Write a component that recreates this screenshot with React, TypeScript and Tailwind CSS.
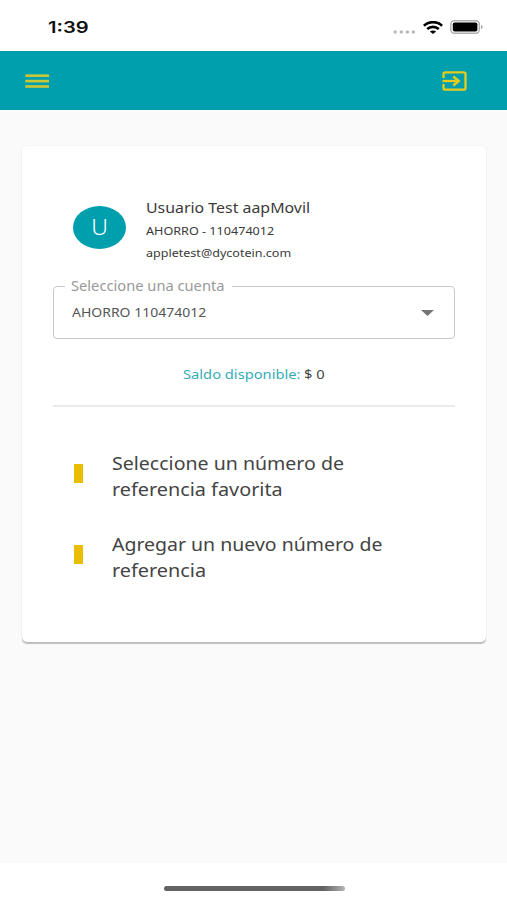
import type { ReactNode } from 'react';

type Opcion = {
  id: number;
  lineas: { texto: string; escala: string }[];
};

const usuario = {
  inicial: 'U',
  nombre: 'Usuario Test aapMovil',
  cuenta: 'AHORRO - 110474012',
  correo: 'appletest@dycotein.com',
};

const opciones: Opcion[] = [
  {
    id: 1,
    lineas: [
      { texto: 'Seleccione un número de', escala: 'scale-x-[1.117]' },
      { texto: 'referencia favorita', escala: 'scale-x-[1.133]' },
    ],
  },
  {
    id: 2,
    lineas: [
      { texto: 'Agregar un nuevo número de', escala: 'scale-x-[1.113]' },
      { texto: 'referencia', escala: 'scale-x-[1.135]' },
    ],
  },
];

// Una línea de texto ensanchada desde su borde izquierdo
function Linea({ className, children }: { className: string; children: ReactNode }) {
  return <span className={`block w-fit whitespace-nowrap origin-left ${className}`}>{children}</span>;
}

function BarraEstado() {
  return (
    <div className="h-[51px] shrink-0 bg-white flex items-start justify-between pl-12 pr-6">
      <Linea className="mt-[17px] font-['Inter',sans-serif] text-[16px] leading-5 font-semibold text-[#111] scale-x-[1.26]">
        1:39
      </Linea>
      <div className="flex items-center mt-[20px]">
        <svg width="24" height="4" viewBox="0 0 24 4" className="mt-[9px]" fill="#b8b8b8">
          <circle cx="2.2" cy="2" r="1.7" />
          <circle cx="8.3" cy="2" r="1.7" />
          <circle cx="14.4" cy="2" r="1.7" />
          <circle cx="20.5" cy="2" r="1.7" />
        </svg>
        <svg width="20" height="13" viewBox="0 0 20 13" className="ml-[6px]" fill="none" stroke="#000" strokeWidth="2.6">
          <path d="M.9 4.700C6-.1 14-.1 19.100 4.700" />
          <path d="M4.200 8c3.300-2.900 8.300-2.900 11.600 0" />
          <path d="M10 13 6.900 10.600c1.800-1.500 4.400-1.500 6.200 0z" fill="#000" stroke="none" />
        </svg>
        <svg width="34" height="14" viewBox="0 0 34 14" className="ml-[7px] -mr-[1px]">
          <rect x=".8" y=".8" width="28.6" height="12.4" rx="3.6" fill="none" stroke="#b0b0b0" strokeWidth="1.4" />
          <rect x="2.8" y="2.4" width="24.6" height="9.2" rx="1.800" fill="#000" />
          <path d="M31 5v4c1-.3 1.600-1.100 1.600-2S32 5.300 31 5z" fill="#a8a8a8" />
        </svg>
      </div>
    </div>
  );
}

function Cabecera() {
  return (
    <header className="h-[59px] shrink-0 bg-[#009fae] flex items-center justify-between pl-[25px] pr-[40px]">
      <button aria-label="Menú">
        <svg width="24" height="14" viewBox="0 0 24 14" fill="#cbc636">
          <rect x=".3" y=".4" width="23.700" height="2.600" />
          <rect x=".3" y="5.800" width="23.700" height="2.600" />
          <rect x=".3" y="11.200" width="23.700" height="2.600" />
        </svg>
      </button>
      <button aria-label="Salir">
        <svg width="25" height="20" viewBox="0 0 25 20" fill="none" stroke="#e6cb1d" strokeWidth="2.3">
          <path d="M1.500 7V3q0-1.700 1.800-1.700h18.400q1.800 0 1.800 1.700v14q0 1.700-1.800 1.700H3.300q-1.800 0-1.800-1.700v-4" />
          <path d="M.5 10H17" />
          <path d="M11.300 5.600 16.600 10l-5.300 4.400" strokeWidth="2.600" />
        </svg>
      </button>
    </header>
  );
}

export default function App() {
  return (
    <div className="h-[900px] w-[507px] overflow-hidden bg-[#fafafa] flex flex-col font-['Noto_Sans',sans-serif]">
      <BarraEstado />
      <Cabecera />

      <main className="flex-1 pl-[22px] pr-[21px] pt-9">
        <div className="h-[496px] bg-white rounded-[5px] px-[31px] pt-[50px] shadow-[0_2px_1px_rgba(0,0,0,0.24),0_0_2px_rgba(0,0,0,0.07)]">

          {/* Datos del usuario */}
          <div className="flex h-[80px] pl-[20px]">
            <div className="mt-[10px] w-[53px] h-[43px] rounded-[50%] bg-[#009fae] flex items-center justify-center">
              <span className="text-[21px] leading-none font-light text-white scale-x-[1.1]">{usuario.inicial}</span>
            </div>
            <div className="ml-5 text-[#3a3a3a]">
              <Linea className="text-[14px] leading-[23px] scale-x-[1.135]">{usuario.nombre}</Linea>
              <Linea className="mt-[2px] text-[10.5px] leading-[21px] scale-x-[1.2]">{usuario.cuenta}</Linea>
              <Linea className="text-[11px] leading-[21px] scale-x-[1.14]">{usuario.correo}</Linea>
            </div>
          </div>

          {/* Selector de cuenta */}
          <fieldset className="h-[63px] border-[1.5px] border-[#c9c9c9] rounded-[4px] pl-[11px] pr-5">
            <legend className="w-[167px] h-5 pl-[6px]">
              <Linea className="text-[13.5px] leading-5 text-[#999] scale-x-[1.087]">Seleccione una cuenta</Linea>
            </legend>
            <div className="flex items-center justify-between pt-[7px] pl-[7px]">
              <Linea className="text-[12px] leading-5 text-[#555] scale-x-[1.165]">AHORRO 110474012</Linea>
              <svg width="13" height="6" viewBox="0 0 13 6" fill="#757575">
                <path d="M0 0h13L6.500 6z" />
              </svg>
            </div>
          </fieldset>

          <div className="flex items-center h-[66px] pl-[130px] pt-[3px]">
            <div className="w-[121px]">
              <Linea className="text-[13px] leading-5 text-[#36adb4] scale-x-[1.13]">Saldo disponible:</Linea>
            </div>
            <Linea className="text-[13px] leading-5 text-[#444] scale-x-[1.13]">$ 0</Linea>
          </div>
          <hr className="border-0 h-[2px] bg-[#ebebeb]" />

          {/* Opciones */}
          <ul className="pt-[44px] pl-[21px] flex flex-col gap-[30px]">
            {opciones.map((o) => (
              <li key={o.id} className="flex items-start">
                <span className="mt-[13px] w-[9px] h-[19px] bg-[#e9bd00]"></span>
                <div className="ml-[29px] text-[17.5px] leading-[25.5px] text-[#444]">
                  {o.lineas.map((l) => (
                    <Linea key={l.texto} className={l.escala}>{l.texto}</Linea>
                  ))}
                </div>
              </li>
            ))}
          </ul>
        </div>
      </main>

      <footer className="h-[37px] shrink-0 bg-white flex justify-center pt-[23px] pl-px">
        <div className="w-[181px] h-[5px] rounded-full bg-linear-to-r from-[#626262] from-88% to-[#b5b5b5]"></div>
      </footer>
    </div>
  );
}
